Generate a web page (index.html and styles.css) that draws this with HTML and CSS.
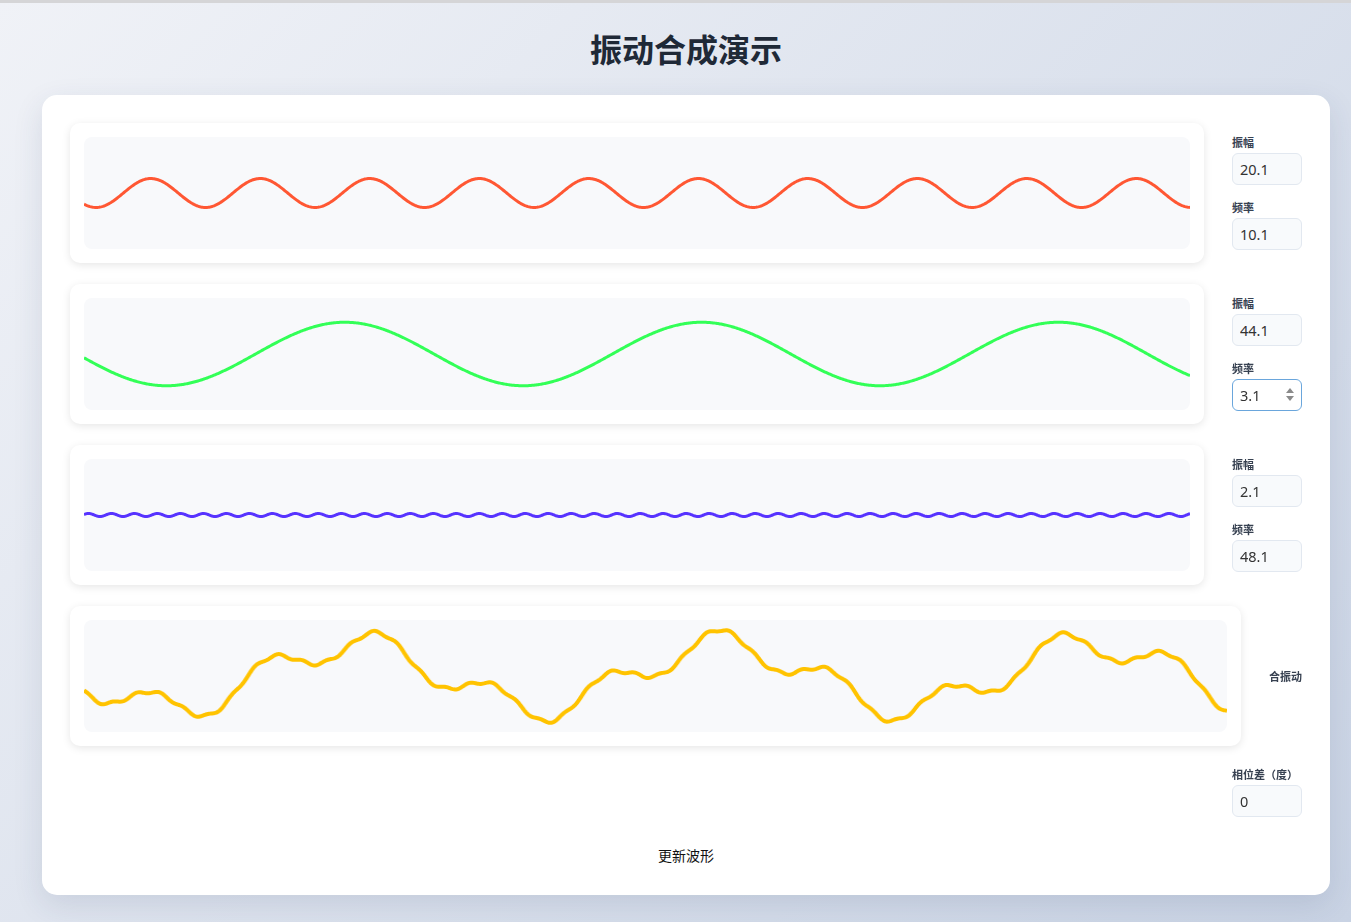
FILE: index.html
```html
<!DOCTYPE html>
<html lang="zh-CN">
<head>
<meta charset="utf-8">
<title>振动合成演示</title>
<link rel="stylesheet" href="styles.css">
</head>
<body>
<div class="page">
  <h1 class="title">振动合成演示</h1>
  <div class="panel">
    <div class="row">
      <div class="wave-card"><canvas class="wave" id="w1" width="1106" height="112"></canvas></div>
      <div class="controls">
        <label class="ctl-label">振幅</label>
        <input class="ctl-input" type="text" value="20.1">
        <label class="ctl-label second">频率</label>
        <input class="ctl-input" type="text" value="10.1">
      </div>
    </div>
    <div class="row">
      <div class="wave-card"><canvas class="wave" id="w2" width="1106" height="112"></canvas></div>
      <div class="controls">
        <label class="ctl-label">振幅</label>
        <input class="ctl-input" type="text" value="44.1">
        <label class="ctl-label second">频率</label>
        <div class="input-wrap">
          <input class="ctl-input focused" type="text" value="3.1">
          <span class="spinner"><span class="tri-up"></span><span class="tri-down"></span></span>
        </div>
      </div>
    </div>
    <div class="row">
      <div class="wave-card"><canvas class="wave" id="w3" width="1106" height="112"></canvas></div>
      <div class="controls">
        <label class="ctl-label">振幅</label>
        <input class="ctl-input" type="text" value="2.1">
        <label class="ctl-label second">频率</label>
        <input class="ctl-input" type="text" value="48.1">
      </div>
    </div>
    <div class="row">
      <div class="wave-card"><canvas class="wave" id="sum" width="1106" height="112"></canvas></div>
      <div class="sum-label">合振动</div>
    </div>
    <div class="phase-row">
      <div class="controls">
        <label class="ctl-label">相位差（度）</label>
        <input class="ctl-input" type="text" value="0">
      </div>
    </div>
    <div class="btn-row">
      <button class="update-btn" type="button">更新波形</button>
    </div>
  </div>
</div>
<script src="script.js"></script>
</body>
</html>
```

FILE: styles.css
```css
html, body {
  margin: 0;
  padding: 0;
}
body {
  min-height: 100vh;
  background: linear-gradient(135deg, #f0f2f7 0%, #c9d3e4 100%);
  border-top: 3px solid #d5d5d7;
  box-sizing: border-box;
  font-family: "Noto Sans", "Noto Sans CJK SC", sans-serif;
  color: #333;
}
.page {
  padding: 26px 21px 27px 42px;
}
.title {
  margin: 0 0 28px;
  height: 38px;
  line-height: 38px;
  text-align: center;
  font-family: "Noto Sans CJK SC", sans-serif;
  font-size: 32px;
  font-weight: 700;
  color: #1f2937;
}
.panel {
  background: #fff;
  border-radius: 15px;
  box-shadow: 0 10px 30px rgba(40, 60, 100, 0.12);
  padding: 28px 28px 21px;
  display: flex;
  flex-direction: column;
  gap: 21px;
}
.row {
  display: flex;
  align-items: center;
  gap: 28px;
}
.wave-card {
  flex: 1;
  background: #fff;
  border-radius: 10px;
  padding: 14px;
  box-shadow: 0 2px 8px rgba(0, 0, 0, 0.1);
}
.wave {
  display: block;
  width: 100%;
  height: 112px;
  background: #f8f9fb;
  border-radius: 8px;
}
.controls {
  width: 70px;
  display: flex;
  flex-direction: column;
}
.row .controls {
  padding-bottom: 2px;
}
.ctl-label {
  display: block;
  height: 14px;
  line-height: 14px;
  margin-bottom: 4px;
  font-family: "Noto Sans CJK SC", sans-serif;
  font-size: 11px;
  font-weight: 700;
  color: #374151;
  white-space: nowrap;
}
.ctl-label.second {
  margin-top: 15px;
}
.ctl-input {
  display: block;
  box-sizing: border-box;
  width: 70px;
  height: 32px;
  margin: 0;
  padding: 0 7px;
  border: 1px solid #e2e8f0;
  border-radius: 6px;
  background: #f8fafc;
  font-family: "Noto Sans", "Noto Sans CJK SC", sans-serif;
  font-size: 14.5px;
  color: #333;
  outline: none;
}
.ctl-input.focused {
  border-color: #6aa6dc;
  background: #fff;
}
.input-wrap {
  position: relative;
}
.spinner {
  position: absolute;
  right: 8px;
  top: 8px;
  width: 8px;
  height: 16px;
  display: flex;
  flex-direction: column;
  align-items: center;
  gap: 3px;
  padding-top: 1px;
}
.tri-up {
  width: 0;
  height: 0;
  border-left: 4px solid transparent;
  border-right: 4px solid transparent;
  border-bottom: 5px solid #8a8a8a;
}
.tri-down {
  width: 0;
  height: 0;
  border-left: 4px solid transparent;
  border-right: 4px solid transparent;
  border-top: 5px solid #8a8a8a;
}
.sum-label {
  font-family: "Noto Sans CJK SC", sans-serif;
  font-size: 11px;
  font-weight: 700;
  color: #374151;
  white-space: nowrap;
}
.phase-row {
  display: flex;
  justify-content: flex-end;
}
.btn-row {
  display: flex;
  justify-content: center;
}
.update-btn {
  height: 36px;
  padding: 0 10px 2px;
  border: none;
  background: none;
  font-family: "Noto Sans CJK SC", sans-serif;
  font-size: 14px;
  color: #111;
}
```

FILE: script.js
```js
(function () {
  var S = 0.72;
  var waves = [
    { id: 'w1', A: 20.1, f: 10.1, p: 0.88, color: '#FF5733' },
    { id: 'w2', A: 44.1, f: 3.1, p: 0.12, color: '#33FF57' },
    { id: 'w3', A: 2.1, f: 48.1, p: -2.8, color: '#5733FF' }
  ];
  function val(w, t) {
    return w.A * Math.sin(2 * Math.PI * w.f * t + w.p);
  }
  function draw(id, fn, color, lw) {
    var c = document.getElementById(id);
    var ctx = c.getContext('2d');
    var W = c.width, H = c.height;
    ctx.clearRect(0, 0, W, H);
    ctx.beginPath();
    for (var x = 0; x <= W; x++) {
      var y = H / 2 + S * fn(x / W);
      if (x === 0) ctx.moveTo(x, y); else ctx.lineTo(x, y);
    }
    ctx.strokeStyle = color;
    ctx.lineWidth = lw;
    ctx.lineJoin = 'round';
    ctx.stroke();
  }
  waves.forEach(function (w) {
    draw(w.id, function (t) { return val(w, t); }, w.color, 3);
  });
  draw('sum', function (t) {
    var s = 0;
    waves.forEach(function (w) { s += val(w, t); });
    return s;
  }, '#FFC300', 4);
})();
```
